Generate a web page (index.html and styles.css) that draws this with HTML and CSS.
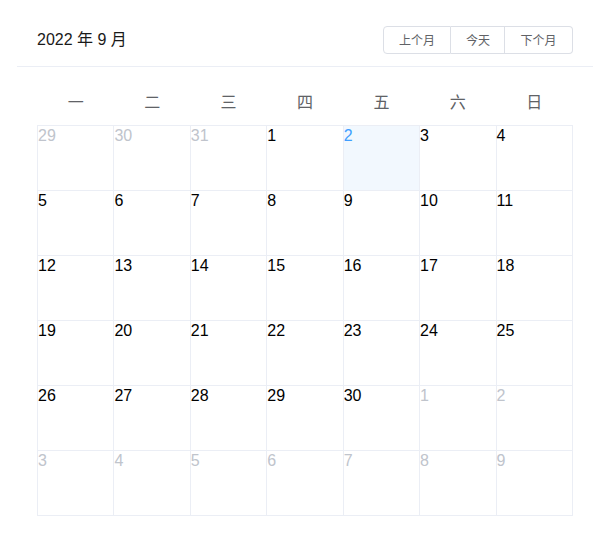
FILE: index.html
```html
<!DOCTYPE html>
<html lang="zh-CN">
<head>
<meta charset="utf-8">
<title>Calendar</title>
<link rel="stylesheet" href="styles.css">
</head>
<body>
<div class="calendar">
  <div class="cal-header">
    <div class="cal-title">2022 年 9 月</div>
    <div class="btn-group">
      <button class="btn" type="button">上个月</button>
      <button class="btn" type="button">今天</button>
      <button class="btn" type="button">下个月</button>
    </div>
  </div>
  <div class="cal-body">
    <table class="cal-table">
      <thead>
        <tr><th>一</th><th>二</th><th>三</th><th>四</th><th>五</th><th>六</th><th>日</th></tr>
      </thead>
      <tbody>
        <tr>
          <td class="other"><div class="day">29</div></td>
          <td class="other"><div class="day">30</div></td>
          <td class="other"><div class="day">31</div></td>
          <td><div class="day">1</div></td>
          <td class="today"><div class="day">2</div></td>
          <td><div class="day">3</div></td>
          <td><div class="day">4</div></td>
        </tr>
        <tr>
          <td><div class="day">5</div></td>
          <td><div class="day">6</div></td>
          <td><div class="day">7</div></td>
          <td><div class="day">8</div></td>
          <td><div class="day">9</div></td>
          <td><div class="day">10</div></td>
          <td><div class="day">11</div></td>
        </tr>
        <tr>
          <td><div class="day">12</div></td>
          <td><div class="day">13</div></td>
          <td><div class="day">14</div></td>
          <td><div class="day">15</div></td>
          <td><div class="day">16</div></td>
          <td><div class="day">17</div></td>
          <td><div class="day">18</div></td>
        </tr>
        <tr>
          <td><div class="day">19</div></td>
          <td><div class="day">20</div></td>
          <td><div class="day">21</div></td>
          <td><div class="day">22</div></td>
          <td><div class="day">23</div></td>
          <td><div class="day">24</div></td>
          <td><div class="day">25</div></td>
        </tr>
        <tr>
          <td><div class="day">26</div></td>
          <td><div class="day">27</div></td>
          <td><div class="day">28</div></td>
          <td><div class="day">29</div></td>
          <td><div class="day">30</div></td>
          <td class="other"><div class="day">1</div></td>
          <td class="other"><div class="day">2</div></td>
        </tr>
        <tr>
          <td class="other"><div class="day">3</div></td>
          <td class="other"><div class="day">4</div></td>
          <td class="other"><div class="day">5</div></td>
          <td class="other"><div class="day">6</div></td>
          <td class="other"><div class="day">7</div></td>
          <td class="other"><div class="day">8</div></td>
          <td class="other"><div class="day">9</div></td>
        </tr>
      </tbody>
    </table>
  </div>
</div>
</body>
</html>
```

FILE: styles.css
```css
html, body {
  margin: 0;
  padding: 0;
  background: #fff;
}

body {
  font-family: "Liberation Sans", "Noto Sans CJK SC", sans-serif;
  color: #000;
}

.calendar {
  margin: 14px 7px 0 17px;
}

.cal-header {
  display: flex;
  justify-content: space-between;
  align-items: center;
  padding: 12px 20px;
  border-bottom: 1px solid #ebeef5;
}

.cal-title {
  font-size: 16px;
  color: #1a1a1a;
  line-height: 28px;
}

.btn-group {
  display: flex;
}

.btn {
  font-family: "Noto Sans CJK SC", sans-serif;
  font-size: 12px;
  line-height: 12px;
  height: 28px;
  padding: 7px 15px;
  border: 1px solid #dcdfe6;
  background: #fff;
  color: #606266;
  margin: 0;
  white-space: nowrap;
  box-sizing: border-box;
  cursor: pointer;
}

.btn + .btn {
  border-left: 0;
}

.btn:first-child {
  border-radius: 4px 0 0 4px;
  width: 68px;
}

.btn:nth-child(2) {
  width: 54px;
}

.btn:last-child {
  border-radius: 0 4px 4px 0;
  width: 68px;
}

.cal-body {
  padding: 12px 20px 35px;
}

.cal-table {
  width: 100%;
  border-collapse: collapse;
  table-layout: fixed;
}

.cal-table th {
  font-family: "Noto Sans CJK SC", sans-serif;
  font-weight: normal;
  font-size: 16px;
  color: #606266;
  padding: 11px 0 13px;
  line-height: 22px;
}

.cal-table td {
  border: 1px solid #ebeef5;
  vertical-align: top;
  padding: 0;
}

.day {
  height: 63px;
  padding-top: 1px;
  font-size: 16px;
  color: #000;
}

.other .day {
  color: #c0c4cc;
}

.today {
  background: #f2f8fe;
}

.today .day {
  color: #409eff;
}
```
